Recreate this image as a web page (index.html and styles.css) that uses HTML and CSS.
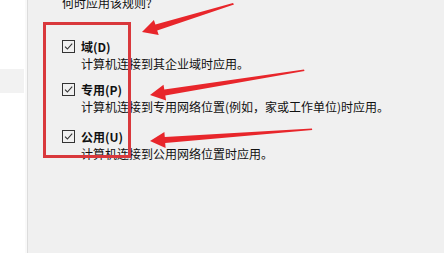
FILE: index.html
```html
<!DOCTYPE html>
<html lang="zh-CN">
<head>
  <meta charset="UTF-8" />
  <meta name="viewport" content="width=device-width, initial-scale=1" />
  <title>何时应用该规则</title>
  <link rel="stylesheet" href="styles.css">
</head>

<body>
  <div class="window">
    <div class="sidebar">
      <div class="side-item"></div>
    </div>

    <div class="panel">
      <p class="question">何时应用该规则?</p>

      <div class="options">
        <div class="option">
          <div class="option-label">
            <svg class="check" width="13" height="13" viewBox="0 0 13 13">
              <rect x="0.5" y="0.5" width="12" height="12" fill="none" stroke="#333" />
              <path d="M3 6.6 L5.4 9 L10.2 3.6" fill="none" stroke="#333" stroke-width="1.1" />
            </svg>
            <b>域(D)</b>
          </div>
          <div class="option-desc">计算机连接到其企业域时应用。</div>
        </div>

        <div class="option">
          <div class="option-label">
            <svg class="check" width="13" height="13" viewBox="0 0 13 13">
              <rect x="0.5" y="0.5" width="12" height="12" fill="none" stroke="#333" />
              <path d="M3 6.6 L5.4 9 L10.2 3.6" fill="none" stroke="#333" stroke-width="1.1" />
            </svg>
            <b>专用(P)</b>
          </div>
          <div class="option-desc">计算机连接到专用网络位置(例如，家或工作单位)时应用。</div>
        </div>

        <div class="option option-last">
          <div class="option-label">
            <svg class="check" width="13" height="13" viewBox="0 0 13 13">
              <rect x="0.5" y="0.5" width="12" height="12" fill="none" stroke="#333" />
              <path d="M3 6.6 L5.4 9 L10.2 3.6" fill="none" stroke="#333" stroke-width="1.1" />
            </svg>
            <b>公用(U)</b>
          </div>
          <div class="option-desc">计算机连接到公用网络位置时应用。</div>
        </div>
      </div>
    </div>

    <!-- annotations drawn on top of the screenshot -->
    <div class="mark-box"></div>
    <svg class="arrows" width="444" height="253" viewBox="0 0 444 253">
      <polygon points="142,32 153.9,19.9 155.4,24.6 233,3 234,4.5 157.2,30.4 158.7,35.1" />
      <polygon points="150,95 163.5,84.7 164.3,89.6 304,69.5 304.5,71 165.3,95.6 166.1,100.5" />
      <polygon points="150,141 164.4,131.9 164.8,136.9 312,128.5 312.2,130 165.2,142.9 165.6,147.9" />
    </svg>
  </div>
</body>
</html>
```

FILE: styles.css
```css
* {
  box-sizing: border-box;
  margin: 0;
  padding: 0;
}

html, body {
  width: 444px;
  height: 253px;
  overflow: hidden;
  background: #f0f0f0;
  font-family: "Noto Sans CJK SC", "Microsoft YaHei", sans-serif;
  color: #111;
}

.window {
  position: relative;
  display: flex;
  width: 444px;
  height: 253px;
}

.sidebar {
  width: 28px;
  background: #fff;
  border-right: 1px solid #dcdcdc;
  box-shadow: inset -2px 0 0 #f9f9f9;
  padding-top: 69px;
}

.side-item {
  width: 24px;
  height: 24px;
  background: #f2f2f2;
}

.panel {
  flex: 1;
  padding-left: 34px;
}

.question {
  font-size: 12px;
  line-height: 14px;
  margin-top: -4px;
}

.options {
  margin-top: 28px;
}

.option + .option {
  margin-top: 9px;
}

.option.option-last {
  margin-top: 13px;
}

.option-label {
  display: flex;
  align-items: center;
  gap: 6px;
  height: 17px;
  font-size: 12px;
}

.option-label b {
  font-weight: bold;
}

.check {
  display: block;
  flex: none;
}

.option-desc {
  padding-left: 19px;
  font-size: 12px;
  line-height: 17px;
  white-space: nowrap;
}

.mark-box {
  position: absolute;
  left: 43px;
  top: 22px;
  width: 88px;
  height: 136px;
  border: 3px solid #d9383c;
}

.arrows {
  position: absolute;
  left: 0;
  top: 0;
}

.arrows polygon {
  fill: #e8262b;
}
```
